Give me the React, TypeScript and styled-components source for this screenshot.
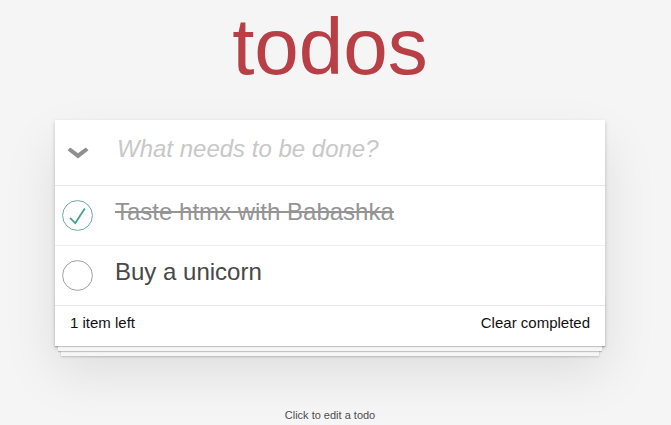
import styled, { createGlobalStyle } from "styled-components";

const GlobalStyle = createGlobalStyle`
  html,
  body {
    margin: 0;
    padding: 0;
  }

  body {
    background: #f5f5f5;
    color: #111;
    font-family: "Liberation Sans", Arial, sans-serif;
    font-size: 14px;
    line-height: 1.4em;
    -webkit-font-smoothing: antialiased;
  }
`;

const Page = styled.div`
  width: 550px;
  margin-left: 55px;
`;

const Title = styled.h1`
  margin: 0 0 26px;
  height: 94px;
  line-height: 94px;
  font-size: 80px;
  font-weight: 400;
  text-align: center;
  color: #b83f45;
  text-rendering: optimizeLegibility;
`;

const TodoApp = styled.section`
  position: relative;
  background: #fff;
  box-shadow: 0 2px 4px 0 rgba(0, 0, 0, 0.2), 0 25px 50px 0 rgba(0, 0, 0, 0.1);
`;

const Header = styled.header`
  display: flex;
  align-items: stretch;
  height: 65px;
  background: #fff;
`;

const ToggleAll = styled.label`
  display: flex;
  align-items: center;
  justify-content: center;
  width: 45px;
  flex-shrink: 0;
  color: #8f8f8f;
`;

const NewTodo = styled.input`
  flex: 1;
  min-width: 0;
  box-sizing: border-box;
  height: 65px;
  margin: 0;
  padding: 12px 16px 20px 17px;
  border: none;
  outline: none;
  background: transparent;
  font-family: inherit;
  font-size: 24px;
  color: #484848;

  &::placeholder {
    font-style: italic;
    color: #c8c8c8;
  }
`;

const List = styled.ul`
  margin: 0;
  padding: 0;
  list-style: none;
  border-top: 1px solid #e6e6e6;
`;

const Item = styled.li`
  display: flex;
  align-items: center;
  font-size: 24px;
  border-bottom: 1px solid #ededed;

  &:last-child {
    border-bottom: none;
  }
`;

const Check = styled.span`
  display: flex;
  align-items: center;
  width: 60px;
  padding-left: 7px;
  box-sizing: border-box;
  flex-shrink: 0;
`;

const Label = styled.label<{ $done?: boolean }>`
  flex: 1;
  padding: 12px 15px 18px 0;
  line-height: 1.2;
  color: ${(p) => (p.$done ? "#949494" : "#484848")};
  text-decoration: ${(p) => (p.$done ? "line-through" : "none")};
  word-break: break-all;
`;

const Footer = styled.footer`
  position: relative;
  display: flex;
  justify-content: space-between;
  height: 20px;
  padding: 7px 15px 13px;
  border-top: 1px solid #e6e6e6;
  font-size: 15px;
  line-height: 20px;
  color: #111;

  &::before {
    content: "";
    position: absolute;
    right: 0;
    bottom: 0;
    left: 0;
    height: 50px;
    overflow: hidden;
    pointer-events: none;
    box-shadow: 0 1px 1px rgba(0, 0, 0, 0.2), 0 8px 0 -3px #f6f6f6,
      0 9px 1px -3px rgba(0, 0, 0, 0.2), 0 16px 0 -6px #f6f6f6,
      0 17px 2px -6px rgba(0, 0, 0, 0.2);
  }
`;

const Count = styled.span`
  position: relative;
`;

const ClearButton = styled.button`
  position: relative;
  margin: 0;
  padding: 0;
  border: none;
  background: none;
  font-family: inherit;
  font-size: 15px;
  line-height: 20px;
  color: #111;
  cursor: pointer;
`;

const Info = styled.footer`
  margin-top: 62px;
  font-size: 11px;
  line-height: 14px;
  text-align: center;
  color: #4d4d4d;
  text-shadow: 0 1px 0 rgba(255, 255, 255, 0.5);
`;

const Chevron = () => (
  <svg width="22" height="12" viewBox="0 0 22 12">
    <path d="M0.5 3.2 L3.2 0.5 L11 6.3 L18.8 0.5 L21.5 3.2 L11 11.5 Z" fill="currentColor" />
  </svg>
);

const CheckCircle = ({ done }: { done?: boolean }) => (
  <svg width="31" height="31" viewBox="-2 -2 104 104">
    <circle cx="50" cy="50" r="50" fill="none" stroke={done ? "#59a193" : "#949494"} strokeWidth="3" />
    {done && <path fill="#3ea390" d="M72 25L42 71 27 56l-4 4 20 20 34-52z" />}
  </svg>
);

const todos = [
  { id: 1, title: "Taste htmx with Babashka", done: true },
  { id: 2, title: "Buy a unicorn", done: false },
];

export default function App() {
  const left = todos.filter((t) => !t.done).length;
  return (
    <>
      <GlobalStyle />
      <Page>
        <Title>todos</Title>
        <TodoApp>
          <Header>
            <ToggleAll>
              <Chevron />
            </ToggleAll>
            <NewTodo placeholder="What needs to be done?" />
          </Header>
          <List>
            {todos.map((t) => (
              <Item key={t.id}>
                <Check>
                  <CheckCircle done={t.done} />
                </Check>
                <Label $done={t.done}>{t.title}</Label>
              </Item>
            ))}
          </List>
          <Footer>
            <Count>{left} item left</Count>
            <ClearButton>Clear completed</ClearButton>
          </Footer>
        </TodoApp>
        <Info>Click to edit a todo</Info>
      </Page>
    </>
  );
}
